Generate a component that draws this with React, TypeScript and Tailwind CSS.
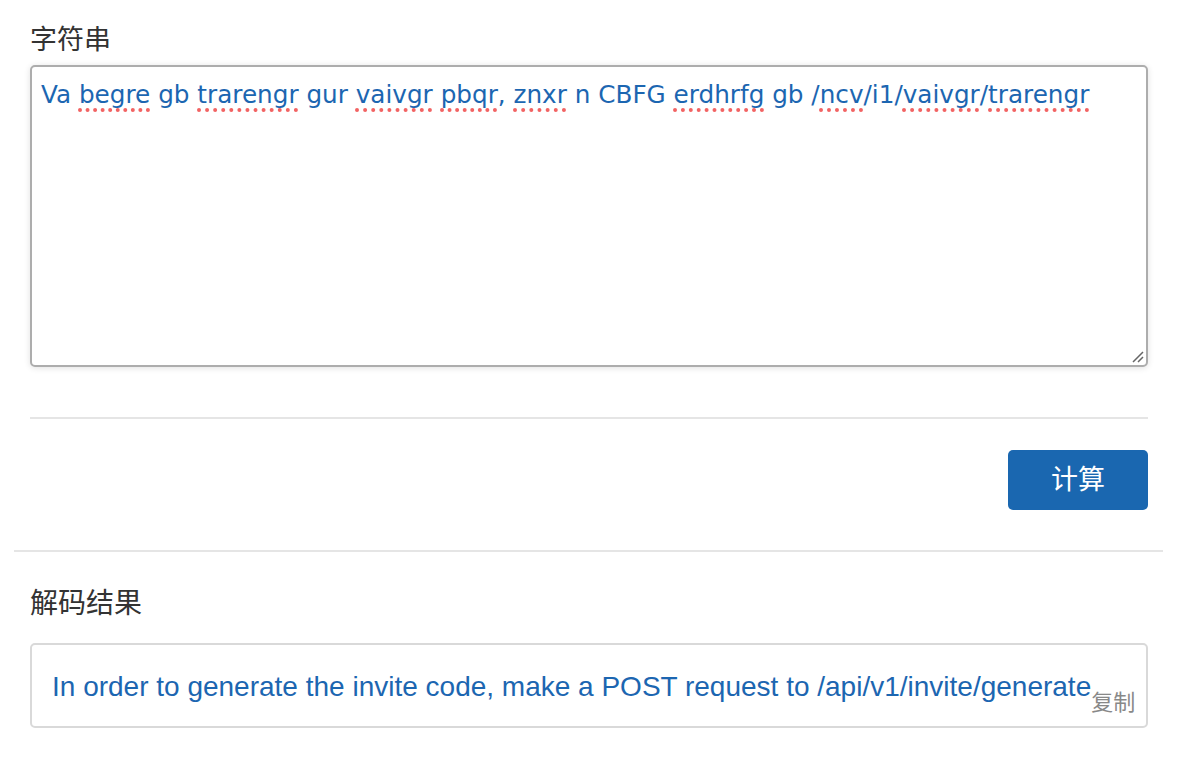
import React from "react";

const cjk = "font-['Liberation_Sans','Noto_Sans_CJK_SC',sans-serif]";

const words: { t: string; bad?: boolean }[] = [
  { t: "Va " },
  { t: "begre", bad: true },
  { t: " gb " },
  { t: "trarengr", bad: true },
  { t: " gur " },
  { t: "vaivgr", bad: true },
  { t: " " },
  { t: "pbqr", bad: true },
  { t: ", " },
  { t: "znxr", bad: true },
  { t: " n CBFG " },
  { t: "erdhrfg", bad: true },
  { t: " gb /" },
  { t: "ncv", bad: true },
  { t: "/i1/" },
  { t: "vaivgr", bad: true },
  { t: "/" },
  { t: "trarengr", bad: true },
];

export default function App() {
  return (
    <main className={`min-h-screen w-[1186px] bg-white ${cjk}`}>
      <section className="pl-[30px] pr-[38px] pt-[22px]">
        <label className="block text-[27px] leading-[36px] text-[#333]">字符串</label>
        <div className="relative mt-[7px] h-[302px] rounded-[5px] border-2 border-[#adadad] bg-white px-[9px] pt-[10px] shadow-[0_1px_6px_rgba(0,0,0,0.12)]">
          <p className="font-['DejaVu_Sans','Noto_Sans_CJK_SC',sans-serif] text-[24.7px] leading-[36px] text-[#1c66b1]">
            {words.map((w, i) =>
              w.bad ? (
                <span
                  key={i}
                  className="underline decoration-dotted decoration-[#f26363] decoration-[4px] underline-offset-[5px]"
                >
                  {w.t}
                </span>
              ) : (
                <span key={i} className="whitespace-pre">
                  {w.t}
                </span>
              )
            )}
          </p>
          <svg className="absolute bottom-[2px] right-[2px]" width="14" height="14" viewBox="0 0 14 14">
            <path d="M13 3 L3 13 M13 8 L8 13" stroke="#666" strokeWidth="1.5" />
          </svg>
        </div>
        <div className="mt-[50px] h-[2px] bg-[#e5e5e5]" />
        <div className="flex justify-end pt-[31px] pb-[40px]">
          <button className="h-[60px] w-[140px] rounded-[5px] bg-[#1a67b0] text-[27px] text-white">计算</button>
        </div>
      </section>
      <div className="ml-[14px] mr-[23px] h-[2px] bg-[#e5e5e5]" />
      <section className="pl-[30px] pr-[38px] pt-[34px]">
        <label className="block text-[28px] leading-[36px] text-[#333]">解码结果</label>
        <div className="mt-[21px] flex h-[85px] items-end rounded-[5px] border-2 border-[#d9d9d9] pb-[21px] pl-[20px]">
          <span className="text-[28px] leading-[36px] text-[#1c66b1]">
            In order to generate the invite code, make a POST request to /api/v1/invite/generate
          </span>
          <span className="mb-[-13px] text-[22px] leading-[30px] text-[#888]">复制</span>
        </div>
      </section>
    </main>
  );
}
